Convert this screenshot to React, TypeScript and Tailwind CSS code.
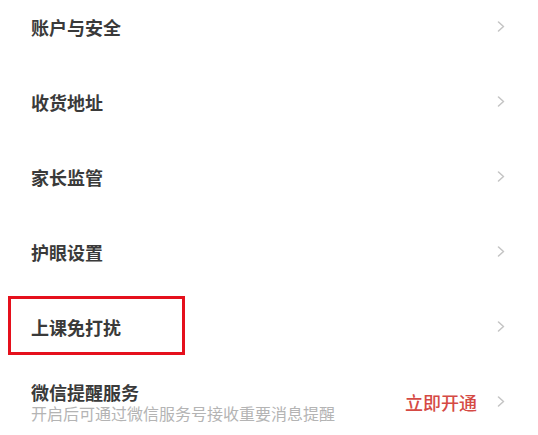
import { ReactNode } from "react";

type RowProps = {
  title: string;
  subtitle?: string;
  action?: string;
  highlight?: boolean;
};

const rows: RowProps[] = [
  { title: "账户与安全" },
  { title: "收货地址" },
  { title: "家长监管" },
  { title: "护眼设置" },
  { title: "上课免打扰", highlight: true },
  {
    title: "微信提醒服务",
    subtitle: "开启后可通过微信服务号接收重要消息提醒",
    action: "立即开通",
  },
];

export default function App() {
  return (
    <div
      className="w-[538px] h-[435px] overflow-hidden bg-white"
      style={{ fontFamily: '"Noto Sans CJK SC", "Noto Sans", sans-serif' }}
    >
      <div className="flex flex-col -mt-[11px]">
        {rows.map((row) => (
          <SettingRow key={row.title} {...row} />
        ))}
      </div>
    </div>
  );
}

function SettingRow({ title, subtitle, action, highlight }: RowProps) {
  return (
    <div className="relative flex flex-row items-center h-[75px] pl-[31px] pr-[33px]">
      <div className="flex flex-col flex-1">
        <span className="block text-[18px] leading-[20px] font-bold text-[#3a3a3a]">{title}</span>
        {subtitle && (
          <span className="block mt-[2px] text-[16px] leading-[18px] text-[#b4b4b4]">{subtitle}</span>
        )}
      </div>
      {action && (
        <span className="text-[18px] leading-[22px] font-medium text-[#d54a44] mr-[20px]">{action}</span>
      )}
      <Chevron />
      {highlight && (
        <div className="absolute left-[8px] top-[7px] w-[177px] h-[59px] border-[3px] border-[#e5101c]" />
      )}
    </div>
  );
}

function Chevron(): ReactNode {
  return (
    <svg width="8" height="11" viewBox="0 0 8 11" fill="none">
      <polyline
        points="1.5,1 6.5,5.5 1.5,10"
        stroke="#c4c4c4"
        strokeWidth="1.5"
        strokeLinecap="round"
        strokeLinejoin="round"
      />
    </svg>
  );
}
